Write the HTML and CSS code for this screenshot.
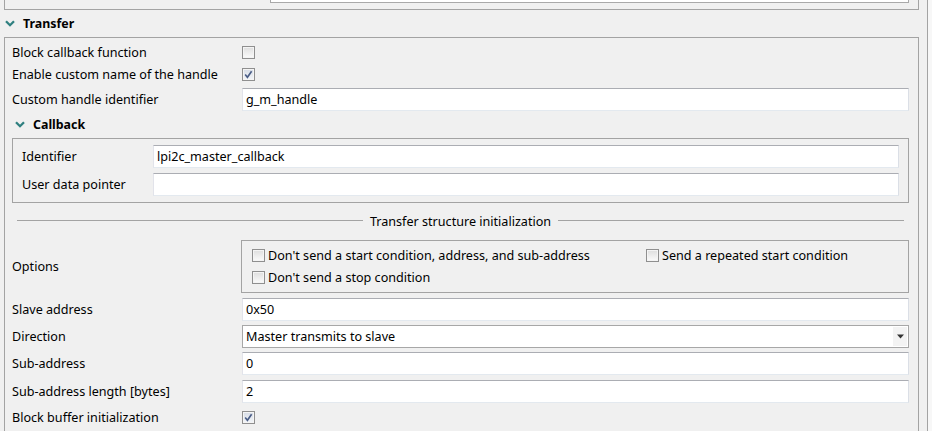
FILE: index.html
```html
<!DOCTYPE html>
<html>
<head>
<meta charset="utf-8">
<link rel="stylesheet" href="styles.css">
</head>
<body>
<div class="window">
  <div class="content">
    <div class="prev-group"><div class="stub"></div></div>

    <div class="section-head">
      <svg class="chev" width="10" height="7" viewBox="0 0 10 7"><path d="M1 1.2 L5 5.2 L9 1.2" fill="none" stroke="#2f8080" stroke-width="2.3"/></svg>
      <span>Transfer</span>
    </div>

    <div class="group">
      <div class="row check-row"><span class="label">Block callback function</span><span class="checkbox"></span></div>
      <div class="row check-row"><span class="label">Enable custom name of the handle</span><span class="checkbox checked"><svg width="11" height="11" viewBox="0 0 11 11"><path d="M2.2 5.6 L4.4 8.3 L8.6 2.2" fill="none" stroke="#4a5d86" stroke-width="1.6"/></svg></span></div>
      <div class="row field-row"><span class="label">Custom handle identifier</span><div class="input">g_m_handle</div></div>

      <div class="section-head sub">
        <svg class="chev" width="10" height="7" viewBox="0 0 10 7"><path d="M1 1.2 L5 5.2 L9 1.2" fill="none" stroke="#2f8080" stroke-width="2.3"/></svg>
        <span>Callback</span>
      </div>

      <div class="subgroup">
        <div class="row sub-row"><span class="label narrow">Identifier</span><div class="input">lpi2c_master_callback</div></div>
        <div class="row sub-row"><span class="label narrow">User data pointer</span><div class="input"></div></div>
      </div>

      <div class="separator"><span class="line"></span><span class="sep-text">Transfer structure initialization</span><span class="line"></span></div>

      <div class="row options-row">
        <span class="label opt-label">Options</span>
        <div class="options-box">
          <label class="opt"><span class="checkbox"></span>Don't send a start condition, address, and sub-address</label>
          <label class="opt"><span class="checkbox"></span>Send a repeated start condition</label>
          <label class="opt"><span class="checkbox"></span>Don't send a stop condition</label>
        </div>
      </div>

      <div class="row field-row gap5"><span class="label">Slave address</span><div class="input">0x50</div></div>
      <div class="row field-row gap4"><span class="label">Direction</span><div class="input combo"><span class="combo-text">Master transmits to slave</span><span class="combo-btn"><svg width="7" height="5" viewBox="0 0 7 5"><path d="M0 0.5 H7 L3.5 4.5 Z" fill="#333"/></svg></span></div></div>
      <div class="row field-row gap4"><span class="label">Sub-address</span><div class="input">0</div></div>
      <div class="row field-row gap5"><span class="label">Sub-address length [bytes]</span><div class="input">2</div></div>
      <div class="row check-row gap3"><span class="label">Block buffer initialization</span><span class="checkbox checked"><svg width="11" height="11" viewBox="0 0 11 11"><path d="M2.2 5.6 L4.4 8.3 L8.6 2.2" fill="none" stroke="#4a5d86" stroke-width="1.6"/></svg></span></div>
    </div>
  </div>
  <div class="rail"></div>
  <div class="edge"></div>
</div>
</body>
</html>
```

FILE: styles.css
```css
body {
  margin: 0;
  background: #f0f0f0;
  font-family: "Noto Sans", "Open Sans", sans-serif;
  font-size: 12.6px;
  color: #000;
}

.window {
  display: flex;
  height: 431px;
  overflow: hidden;
}

.content {
  width: 919px;
  flex: none;
  padding-left: 4px;
  box-sizing: border-box;
}

.rail {
  width: 9px;
  flex: none;
  box-sizing: border-box;
  border-right: 1px solid #a3a3a3;
}

.edge {
  flex: 1;
  background: #f7f7f7;
}

.prev-group {
  height: 10px;
  box-sizing: border-box;
  border: 1px solid #a3a3a3;
  border-top: none;
}

.stub {
  margin-left: 265px;
  width: 639px;
  height: 3px;
  box-sizing: border-box;
  border: 1px solid #a9a9a9;
  border-top: none;
  background: #fff;
}

.section-head {
  height: 27px;
  display: flex;
  align-items: center;
  padding-left: 1px;
  font-weight: bold;
  font-size: 12.4px;
}

.section-head .chev {
  margin-right: 8px;
  flex: none;
}

.section-head.sub {
  padding-left: 10px;
  margin-left: -7px;
}

.group {
  border: 1px solid #a3a3a3;
  padding: 3px 9px 40px 7px;
}

.row {
  display: flex;
  align-items: center;
}

.check-row {
  height: 22px;
}

.field-row {
  margin-top: 3px;
}

.gap3 { margin-top: 3px; }
.gap4 { margin-top: 4px; }
.gap5 { margin-top: 5px; }

.label {
  width: 230px;
  flex: none;
  white-space: nowrap;
}

.label.narrow {
  width: 131px;
}

.input {
  flex: 1;
  height: 23px;
  box-sizing: border-box;
  border-style: solid;
  border-width: 1px;
  border-color: #abadb3 #dbdfe6 #e3e9ef #e2e3ea;
  background: #fff;
  padding-left: 3px;
  display: flex;
  align-items: center;
  white-space: nowrap;
}

.input.combo {
  border-color: #a7a7a7;
  padding-right: 1px;
}

.combo-text {
  flex: 1;
}

.combo-btn {
  width: 14px;
  height: 19px;
  background: #f3f3f3;
  display: flex;
  align-items: center;
  justify-content: center;
}

.checkbox {
  width: 13px;
  height: 13px;
  box-sizing: border-box;
  border: 1px solid #8f8f8f;
  background: linear-gradient(#dedede, #fbfbfb);
  box-shadow: inset 0 0 0 1px #f4f4f4;
  display: inline-flex;
  align-items: center;
  justify-content: center;
  flex: none;
}

.checkbox.checked {
  background: linear-gradient(#d6dce6, #f4f6f9);
}

.subgroup {
  border: 1px solid #a3a3a3;
  padding: 6px 9px;
}

.sub-row + .sub-row {
  margin-top: 5px;
}

.separator {
  display: flex;
  align-items: center;
  margin: 7px 5px 0 5px;
  height: 22px;
}

.separator .line {
  flex: 1;
  height: 1px;
  background: #a3a3a3;
  margin-top: -1px;
}

.sep-text {
  margin: 0 7px;
}

.options-row {
  margin-top: 8px;
}

.opt-label {
  width: 229px;
}

.options-box {
  flex: 1;
  height: 53px;
  box-sizing: border-box;
  border: 1px solid #a3a3a3;
  padding: 3px 0 0 10px;
  display: grid;
  grid-template-columns: 394px 1fr;
  grid-auto-rows: 22px;
}

.opt {
  display: flex;
  align-items: center;
  white-space: nowrap;
}

.opt .checkbox {
  margin-right: 3px;
}
```
